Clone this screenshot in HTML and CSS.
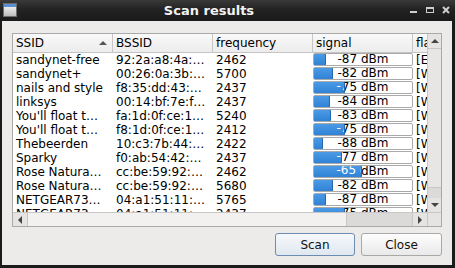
FILE: index.html
```html
<!DOCTYPE html>
<html>
<head>
<meta charset="utf-8">
<link rel="stylesheet" href="styles.css">
</head>
<body>
<div class="window">
  <div class="titlebar">
    <svg class="app-icon" width="14" height="14" viewBox="0 0 14 14">
      <defs>
        <linearGradient id="ig" x1="0" y1="0" x2="0" y2="1">
          <stop offset="0" stop-color="#ffffff"/>
          <stop offset="1" stop-color="#b9b9b9"/>
        </linearGradient>
      </defs>
      <rect x="0.5" y="0.5" width="13" height="13" fill="url(#ig)" stroke="#6d6d6d"/>
      <rect x="1" y="1" width="12" height="3" fill="#5b8fd0"/>
    </svg>
    <div class="title">Scan results</div>
    <div class="wm-buttons">
      <svg width="10" height="10" viewBox="0 0 10 10"><rect x="1" y="6" width="7" height="2" fill="#cfcfcf"/></svg>
      <svg width="10" height="10" viewBox="0 0 10 10"><rect x="1.5" y="2.5" width="7" height="5" fill="none" stroke="#cfcfcf"/><rect x="1" y="2" width="8" height="2" fill="#cfcfcf"/></svg>
      <svg width="10" height="10" viewBox="0 0 10 10"><path d="M2 2 L8 8 M8 2 L2 8" stroke="#cfcfcf" stroke-width="2"/></svg>
    </div>
  </div>
  <div class="client">
    <div class="table-frame">
      <div class="table-main">
        <div class="viewport">
          <div class="header">
            <div class="hcell">SSID<span class="sort"></span></div>
            <div class="hcell">BSSID</div>
            <div class="hcell">frequency</div>
            <div class="hcell">signal</div>
            <div class="hcell last">flags</div>
          </div>
          <div class="rows">
            <div class="row"><div class="cell">sandynet-free</div><div class="cell">92:2a:a8:4a:…</div><div class="cell">2462</div><div class="cell sig"><div class="bar"><span class="btext">-87 dBm</span><div class="chunk" style="width:13px"><span class="btext on">-87 dBm</span></div></div></div><div class="cell last">[ESS]</div></div>
            <div class="row"><div class="cell">sandynet+</div><div class="cell">00:26:0a:3b:…</div><div class="cell">5700</div><div class="cell sig"><div class="bar"><span class="btext">-82 dBm</span><div class="chunk" style="width:20px"><span class="btext on">-82 dBm</span></div></div></div><div class="cell last">[WPA]</div></div>
            <div class="row"><div class="cell">nails and style</div><div class="cell">f8:35:dd:43:…</div><div class="cell">2437</div><div class="cell sig"><div class="bar"><span class="btext">-75 dBm</span><div class="chunk" style="width:32px"><span class="btext on">-75 dBm</span></div></div></div><div class="cell last">[WPA]</div></div>
            <div class="row"><div class="cell">linksys</div><div class="cell">00:14:bf:7e:f…</div><div class="cell">2437</div><div class="cell sig"><div class="bar"><span class="btext">-84 dBm</span><div class="chunk" style="width:17px"><span class="btext on">-84 dBm</span></div></div></div><div class="cell last">[WPA]</div></div>
            <div class="row"><div class="cell">You'll float t…</div><div class="cell">fa:1d:0f:ce:1…</div><div class="cell">5240</div><div class="cell sig"><div class="bar"><span class="btext">-83 dBm</span><div class="chunk" style="width:18px"><span class="btext on">-83 dBm</span></div></div></div><div class="cell last">[WPA]</div></div>
            <div class="row"><div class="cell">You'll float t…</div><div class="cell">f8:1d:0f:ce:1…</div><div class="cell">2412</div><div class="cell sig"><div class="bar"><span class="btext">-75 dBm</span><div class="chunk" style="width:32px"><span class="btext on">-75 dBm</span></div></div></div><div class="cell last">[WPA]</div></div>
            <div class="row"><div class="cell">Thebeerden</div><div class="cell">10:c3:7b:44:…</div><div class="cell">2422</div><div class="cell sig"><div class="bar"><span class="btext">-88 dBm</span><div class="chunk" style="width:10px"><span class="btext on">-88 dBm</span></div></div></div><div class="cell last">[WPA]</div></div>
            <div class="row"><div class="cell">Sparky</div><div class="cell">f0:ab:54:42:…</div><div class="cell">2437</div><div class="cell sig"><div class="bar"><span class="btext">-77 dBm</span><div class="chunk" style="width:29px"><span class="btext on">-77 dBm</span></div></div></div><div class="cell last">[WPA]</div></div>
            <div class="row"><div class="cell">Rose Natura…</div><div class="cell">cc:be:59:92:…</div><div class="cell">2462</div><div class="cell sig"><div class="bar"><span class="btext">-65 dBm</span><div class="chunk" style="width:49px"><span class="btext on">-65 dBm</span></div></div></div><div class="cell last">[WPA]</div></div>
            <div class="row"><div class="cell">Rose Natura…</div><div class="cell">cc:be:59:92:…</div><div class="cell">5680</div><div class="cell sig"><div class="bar"><span class="btext">-82 dBm</span><div class="chunk" style="width:20px"><span class="btext on">-82 dBm</span></div></div></div><div class="cell last">[WPA]</div></div>
            <div class="row"><div class="cell">NETGEAR73…</div><div class="cell">04:a1:51:11:…</div><div class="cell">5765</div><div class="cell sig"><div class="bar"><span class="btext">-87 dBm</span><div class="chunk" style="width:13px"><span class="btext on">-87 dBm</span></div></div></div><div class="cell last">[WPA]</div></div>
            <div class="row"><div class="cell">NETGEAR73…</div><div class="cell">04:a1:51:11:…</div><div class="cell">2437</div><div class="cell sig"><div class="bar"><span class="btext">-75 dBm</span><div class="chunk" style="width:32px"><span class="btext on">-75 dBm</span></div></div></div><div class="cell last">[WPA]</div></div>
          </div>
        </div>
        <div class="vscroll">
          <div class="sbtn"><span class="arr up"></span></div>
          <div class="vslider"></div>
          <div class="vtrack"></div>
          <div class="sbtn"><span class="arr down"></span></div>
        </div>
      </div>
      <div class="hrow">
        <div class="hscroll">
          <div class="sbtn"><span class="arr left"></span></div>
          <div class="hslider"></div>
          <div class="htrack"></div>
          <div class="sbtn"><span class="arr right"></span></div>
        </div>
        <div class="corner"></div>
      </div>
    </div>
    <div class="buttons">
      <button class="btn default">Scan</button>
      <button class="btn">Close</button>
    </div>
  </div>
</div>
</body>
</html>
```
FILE: styles.css
```css
* { box-sizing: border-box; }
html, body { margin: 0; padding: 0; }
body {
  width: 455px;
  height: 268px;
  overflow: hidden;
  background: #1b1b1b;
  font-family: "DejaVu Sans", sans-serif;
  font-size: 12px;
  color: #000;
}
.window {
  width: 455px;
  height: 268px;
  display: flex;
  flex-direction: column;
  background: #1b1b1b;
}
.titlebar {
  height: 21px;
  flex: none;
  display: flex;
  align-items: center;
  padding-left: 3px;
  background: linear-gradient(#3a3a3a, #222 45%, #1a1a1a);
}
.app-icon { flex: none; display: block; margin-top: -2px; }
.title {
  flex: 1;
  text-align: center;
  color: #f2f2f2;
  font-weight: bold;
  font-size: 13px;
  line-height: 21px;
  padding-right: 4px;
}
.wm-buttons {
  flex: none;
  width: 50px;
  display: flex;
  gap: 6px;
  padding-left: 4px;
  align-items: center;
  margin-top: -2px;
}
.wm-buttons svg { display: block; }
.client {
  flex: 1;
  margin: 0 3px 5px 2px;
  background: #edebe9;
  padding: 12px 10px 9px 10px;
  display: flex;
  flex-direction: column;
}
.table-frame {
  width: 430px;
  height: 194px;
  border: 1px solid #a9a9a9;
  background: #fff;
  display: flex;
  flex-direction: column;
}
.table-main {
  flex: 1;
  display: flex;
  min-height: 0;
}
.viewport {
  flex: 1;
  overflow: hidden;
  min-width: 0;
}
.header {
  height: 19px;
  display: flex;
  background: linear-gradient(#f9f9f9, #ececec);
  border-bottom: 1px solid #c4c4c4;
}
.hcell {
  width: 100px;
  flex: none;
  border-right: 1px solid #c6c6c6;
  padding-left: 3px;
  line-height: 18px;
  white-space: nowrap;
  overflow: hidden;
  position: relative;
  font-size: 12px;
}
.hcell.last { flex: 1; width: auto; border-right: none; }
.sort {
  position: absolute;
  right: 5px;
  top: 7px;
  width: 0;
  height: 0;
  border-left: 4px solid transparent;
  border-right: 4px solid transparent;
  border-bottom: 4px solid #555;
}
.rows { display: flex; flex-direction: column; }
.row {
  height: 14px;
  display: flex;
  line-height: 14px;
}
.cell {
  width: 100px;
  flex: none;
  padding-left: 3px;
  white-space: nowrap;
  overflow: hidden;
}
.cell.last { flex: 1; width: auto; }
.cell.sig { padding-left: 0; }
.bar {
  position: relative;
  width: 100px;
  height: 13px;
  border: 1px solid #aaa;
  border-radius: 2px;
  background: #fff;
  overflow: hidden;
}
.btext {
  position: absolute;
  left: 0;
  top: -1px;
  width: 98px;
  text-align: center;
  line-height: 13px;
  color: #000;
}
.btext.on { color: #fff; left: -1px; top: -2px; }
.chunk {
  position: absolute;
  left: -1px;
  top: -1px;
  height: 13px;
  background: linear-gradient(#4c9ae6, #2f82d6);
  border: 1px solid #2468ad;
  border-radius: 2px;
  overflow: hidden;
}
.vscroll {
  width: 14px;
  flex: none;
  border-left: 1px solid #c9c7c5;
  background: #dcdad8;
  display: flex;
  flex-direction: column;
}
.sbtn {
  height: 14px;
  width: 13px;
  flex: none;
  display: flex;
  align-items: center;
  justify-content: center;
  background: #e6e4e2;
}
.hscroll .sbtn { width: 14px; height: 13px; }
.vslider {
  height: 140px;
  flex: none;
  background: #e8e6e4;
  border-top: 1px solid #c9c7c5;
  border-bottom: 1px solid #c9c7c5;
}
.vtrack { flex: 1; }
.hrow {
  height: 14px;
  flex: none;
  display: flex;
  border-top: 1px solid #c9c7c5;
}
.hscroll {
  flex: 1;
  display: flex;
  background: #dcdad8;
}
.hslider {
  width: 320px;
  flex: none;
  background: #f2f1f0;
  border-left: 1px solid #c9c7c5;
  border-right: 1px solid #c9c7c5;
}
.htrack { flex: 1; border-right: 1px solid #c9c7c5; }
.corner {
  width: 14px;
  flex: none;
  background: #e6e4e2;
  border-left: 1px solid #c9c7c5;
}
.arr { width: 0; height: 0; display: block; }
.arr.up { border-left: 4px solid transparent; border-right: 4px solid transparent; border-bottom: 4px solid #444; }
.arr.down { border-left: 4px solid transparent; border-right: 4px solid transparent; border-top: 4px solid #444; }
.arr.left { border-top: 4px solid transparent; border-bottom: 4px solid transparent; border-right: 4px solid #444; }
.arr.right { border-top: 4px solid transparent; border-bottom: 4px solid transparent; border-left: 4px solid #444; }
.buttons {
  margin-top: 6px;
  display: flex;
  justify-content: flex-end;
  gap: 6px;
  padding-right: 0;
}
.btn {
  height: 23px;
  font-family: "DejaVu Sans", sans-serif;
  font-size: 12px;
  color: #111;
  border-radius: 3px;
  padding: 0;
  margin: 0;
}
.btn.default {
  width: 80px;
  border: 1px solid #6c8db1;
  background: linear-gradient(#f6f9fc, #dfe7ef);
}
.btn:not(.default) {
  width: 81px;
  border: 1px solid #a8a8a8;
  background: linear-gradient(#fdfdfd, #e9e9e9);
}
```
